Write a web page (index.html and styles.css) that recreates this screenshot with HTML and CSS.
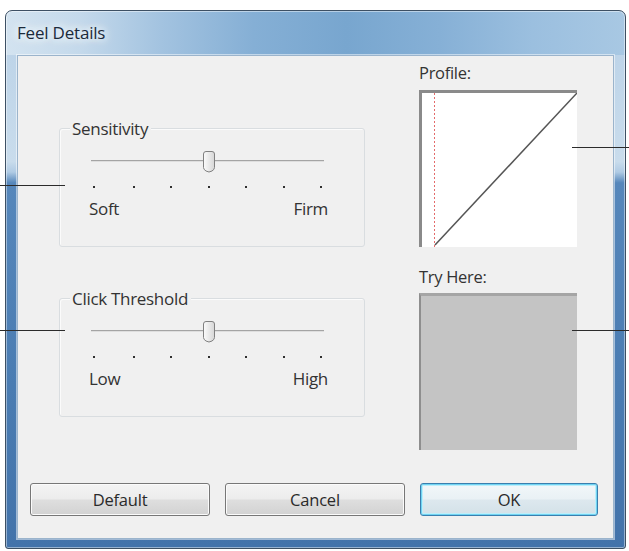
FILE: index.html
```html
<!DOCTYPE html>
<html>
<head>
<meta charset="utf-8">
<link rel="stylesheet" href="styles.css">
</head>
<body>
<div class="window">
  <div class="titlebar"><span class="title">Feel Details</span></div>
  <div class="client">
    <div class="toprow">
      <div class="leftcol">
        <div class="group">
          <span class="group-label">Sensitivity</span>
          <svg class="slider" width="240" height="40" viewBox="0 0 240 40">
            <rect x="2" y="10" width="233" height="1" fill="#a4a4a4"/>
            <rect x="2" y="11" width="233" height="1" fill="#dedede"/>
            <defs>
              <linearGradient id="th" x1="0" y1="0" x2="1" y2="0">
                <stop offset="0" stop-color="#fbfbfb"/>
                <stop offset="1" stop-color="#d6d6d6"/>
              </linearGradient>
            </defs>
            <path d="M114.5,4 Q114.5,1.5 117,1.5 H123 Q125.5,1.5 125.5,4 V17.5 Q125.5,19.5 123,21 L120,22 L117,21 Q114.5,19.5 114.5,17.5 Z" fill="url(#th)" stroke="#808080" stroke-width="1"/>
            <g fill="#2e2e2e">
              <rect x="4" y="36" width="2" height="2"/>
              <rect x="44" y="36" width="2" height="2"/>
              <rect x="81" y="36" width="2" height="2"/>
              <rect x="119" y="36" width="2" height="2"/>
              <rect x="156" y="36" width="2" height="2"/>
              <rect x="194" y="36" width="2" height="2"/>
              <rect x="231" y="36" width="2" height="2"/>
            </g>
          </svg>
          <div class="ends"><span>Soft</span><span>Firm</span></div>
        </div>
        <div class="group second">
          <span class="group-label">Click Threshold</span>
          <svg class="slider" width="240" height="40" viewBox="0 0 240 40">
            <rect x="2" y="10" width="233" height="1" fill="#a4a4a4"/>
            <rect x="2" y="11" width="233" height="1" fill="#dedede"/>
            <defs>
              <linearGradient id="th2" x1="0" y1="0" x2="1" y2="0">
                <stop offset="0" stop-color="#fbfbfb"/>
                <stop offset="1" stop-color="#d6d6d6"/>
              </linearGradient>
            </defs>
            <path d="M114.5,4 Q114.5,1.5 117,1.5 H123 Q125.5,1.5 125.5,4 V17.5 Q125.5,19.5 123,21 L120,22 L117,21 Q114.5,19.5 114.5,17.5 Z" fill="url(#th2)" stroke="#808080" stroke-width="1"/>
            <g fill="#2e2e2e">
              <rect x="4" y="36" width="2" height="2"/>
              <rect x="44" y="36" width="2" height="2"/>
              <rect x="81" y="36" width="2" height="2"/>
              <rect x="119" y="36" width="2" height="2"/>
              <rect x="156" y="36" width="2" height="2"/>
              <rect x="194" y="36" width="2" height="2"/>
              <rect x="231" y="36" width="2" height="2"/>
            </g>
          </svg>
          <div class="ends"><span>Low</span><span>High</span></div>
        </div>
      </div>
      <div class="rightcol">
        <div class="field-label">Profile:</div>
        <div class="profile">
          <svg width="155" height="154" viewBox="0 0 155 154">
            <line x1="12.5" y1="0" x2="12.5" y2="154" stroke="#e46a6a" stroke-width="1" stroke-dasharray="2 2"/>
            <line x1="13" y1="152" x2="155" y2="0" stroke="#555" stroke-width="1.5"/>
          </svg>
        </div>
        <div class="field-label try">Try Here:</div>
        <div class="tryhere"></div>
      </div>
    </div>
    <div class="buttons">
      <button class="btn">Default</button>
      <button class="btn">Cancel</button>
      <button class="btn ok">OK</button>
    </div>
  </div>
</div>
<div class="callout cl1"></div>
<div class="callout cl2"></div>
<div class="callout cr1"></div>
<div class="callout cr2"></div>
</body>
</html>
```
FILE: styles.css
```css
html, body {
  margin: 0;
  padding: 0;
  background: #ffffff;
}
body {
  width: 629px;
  height: 551px;
  overflow: hidden;
  position: relative;
  font-family: "Open Sans", "Noto Sans", "DejaVu Sans", sans-serif;
}
.window {
  margin: 10px 0 0 5px;
  width: 621px;
  height: 539px;
  box-sizing: border-box;
  border: 1px solid #3d5064;
  border-radius: 7px 7px 3px 3px;
  padding: 0 11px 9px 11px;
  display: flex;
  flex-direction: column;
  background:
    linear-gradient(90deg, #d3e3f0 0%, #c4d9eb 12%, #a3c3e0 25%, #85afd5 40%, #78a6cf 55%, #86b0d6 70%, #9bbfdf 85%, #a8c8e3 100%) top left / 100% 44px no-repeat,
    linear-gradient(180deg, #b9d1e7 0%, #c9dcec 28%, #b0cbe4 30%, #5687bb 32%, #4a7cb2 70%, #4373aa 100%);
  box-shadow: inset 0 0 0 1px rgba(255,255,255,0.45);
}
.titlebar {
  height: 44px;
  flex: none;
  display: flex;
  align-items: center;
  padding-bottom: 2px;
  box-sizing: border-box;
}
.title {
  font-size: 17px;
  letter-spacing: -0.2px;
  color: #1b2a3a;
  text-shadow: 0 0 6px #eef5fb, 0 0 10px #eef5fb, 0 0 14px #eef5fb;
}
.client {
  flex: 1;
  background: #f0f0f0;
  border: 1px solid #9bb4cc;
  box-shadow: 0 0 0 1px rgba(255,255,255,0.5);
  display: flex;
  flex-direction: column;
  padding: 0 0 22px 12px;
}
.toprow {
  display: flex;
}
.leftcol {
  width: 306px;
  margin-left: 29px;
  padding-top: 72px;
}
.group {
  height: 119px;
  box-sizing: border-box;
  border: 1px solid #d9dde0;
  border-radius: 3px;
  box-shadow: inset 1px 1px 0 #fbfbfb;
  display: flex;
  flex-direction: column;
  align-items: flex-start;
}
.group.second {
  margin-top: 51px;
}
.group-label {
  margin: -10px 0 0 10px;
  padding: 0 3px 0 2px;
  background: #f0f0f0;
  font-size: 17px;
  letter-spacing: -0.3px;
  line-height: 19px;
  color: #333;
}
.slider {
  display: block;
  margin: 12px 0 0 29px;
}
.ends {
  width: 239px;
  margin: 9px 0 0 29px;
  display: flex;
  justify-content: space-between;
  font-size: 17px;
  letter-spacing: -0.3px;
  line-height: 20px;
  color: #333;
}
.rightcol {
  margin-left: 54px;
  padding-top: 7px;
  display: flex;
  flex-direction: column;
}
.field-label {
  font-size: 16.5px;
  letter-spacing: -0.3px;
  line-height: 20px;
  color: #333;
  margin-left: 0;
}
.field-label.try {
  margin-top: 20px;
}
.profile {
  margin-top: 7px;
  width: 158px;
  height: 157px;
  box-sizing: border-box;
  background: #ffffff;
  border-top: 3px solid #8a8a8a;
  border-left: 3px solid #8a8a8a;
}
.profile svg {
  display: block;
}
.tryhere {
  margin-top: 6px;
  width: 158px;
  height: 157px;
  box-sizing: border-box;
  background: #c4c4c4;
  border-top: 3px solid #a5a5a5;
  border-left: 2px solid #8e8e8e;
}
.buttons {
  margin-top: auto;
  display: flex;
  gap: 15px;
}
.btn {
  width: 180px;
  height: 33px;
  box-sizing: border-box;
  border: 1px solid #777;
  border-radius: 3px;
  background: linear-gradient(180deg, #f4f4f4 0%, #ececec 48%, #dedede 52%, #d2d2d2 100%);
  box-shadow: inset 0 0 0 1px #fbfbfb;
  font-family: "Open Sans", "Noto Sans", sans-serif;
  font-size: 16.5px;
  letter-spacing: -0.2px;
  color: #2a2a2a;
  padding: 0;
}
.btn.ok {
  width: 178px;
  border-color: #3a7fae;
  box-shadow: inset 0 0 0 1px #6fd3f2, inset 0 0 0 2px #bdeefa;
  background: linear-gradient(180deg, #f2f7f9 0%, #e9f1f5 48%, #dde8ee 52%, #d3e1e8 100%);
}
.callout {
  position: absolute;
  height: 1px;
  background: #2b2b2b;
}
.cl1 { left: 0; top: 185px; width: 65px; }
.cl2 { left: 0; top: 330px; width: 65px; }
.cr1 { left: 572px; top: 147px; width: 57px; }
.cr2 { left: 572px; top: 330px; width: 57px; }
```
